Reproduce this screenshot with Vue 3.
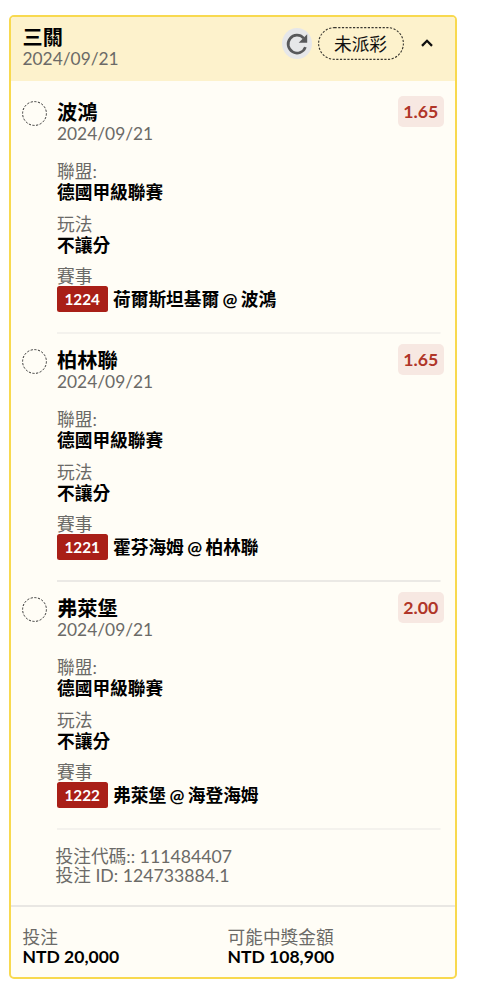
<script setup>
const legs = [
  { team: '波鴻', odds: '1.65', code: '1224', match: '荷爾斯坦基爾 @ 波鴻' },
  { team: '柏林聯', odds: '1.65', code: '1221', match: '霍芬海姆 @ 柏林聯' },
  { team: '弗萊堡', odds: '2.00', code: '1222', match: '弗萊堡 @ 海登海姆' },
]
</script>

<template>
  <main class="page">
    <article class="slip">
      <header class="head">
        <div class="head-text">
          <div class="title">三關</div>
          <div class="date">2024/09/21</div>
        </div>
        <button class="refresh" aria-label="refresh">
          <svg viewBox="0 0 30 30" width="30" height="30">
            <path d="M21.6 9.1 A8.9 8.9 0 1 0 23.4 18.1" fill="none" stroke="#58595b" stroke-width="2.7" />
            <path d="M25.2 5.3 V13.8 H16.7 Z" fill="#58595b" />
          </svg>
        </button>
        <span class="status">
          <svg class="outline" width="86" height="33" viewBox="0 0 86 33">
            <rect x="0.6" y="0.6" width="84.8" height="31.8" rx="15.9" fill="none" stroke="#39372f" stroke-width="1.1" stroke-dasharray="2.2 1.5" />
          </svg>
          未派彩
        </span>
        <svg class="chevron" width="12" height="8" viewBox="0 0 12 8">
          <path d="M1 6.9 L6 1.8 L11 6.9" fill="none" stroke="#111" stroke-width="2.3" />
        </svg>
      </header>

      <section v-for="leg in legs" :key="leg.code" class="leg">
        <svg class="mark" width="25" height="25" viewBox="0 0 25 25">
          <circle cx="12.5" cy="12.5" r="11.9" fill="none" stroke="#333" stroke-width="1" stroke-dasharray="2.2 1.5" />
        </svg>
        <div class="body">
          <div class="top">
            <div>
              <div class="title">{{ leg.team }}</div>
              <div class="date">2024/09/21</div>
            </div>
            <span class="odds">{{ leg.odds }}</span>
          </div>
          <dl>
            <dt>聯盟:</dt>
            <dd>德國甲級聯賽</dd>
            <dt>玩法</dt>
            <dd>不讓分</dd>
            <dt>賽事</dt>
            <dd class="match"><span class="code">{{ leg.code }}</span>{{ leg.match }}</dd>
          </dl>
        </div>
      </section>

      <div class="ids">
        <div>投注代碼:: 111484407</div>
        <div>投注 ID: 124733884.1</div>
      </div>

      <footer class="foot">
        <div class="sum">
          <div>投注</div>
          <strong>NTD 20,000</strong>
        </div>
        <div class="sum">
          <div>可能中獎金額</div>
          <strong>NTD 108,900</strong>
        </div>
      </footer>
    </article>
  </main>
</template>

<style>
body {
  background: #fff;
}
</style>

<style scoped>
.page {
  box-sizing: border-box;
  padding: 15px 0 0 9px;
  font-family: Lato, "Noto Sans CJK TC", sans-serif;
  font-size: 17.7px;
  line-height: 20px;
  color: #6b6a67;
  white-space: nowrap;
}
.slip {
  box-sizing: border-box;
  width: 447.5px;
  height: 964px;
  border: 2px solid #f8d94f;
  border-radius: 5px;
  background: #fffdf6;
  overflow: hidden;
}
.head {
  box-sizing: border-box;
  display: flex;
  align-items: flex-start;
  height: 63.5px;
  padding: 9px 22px 0 11.5px;
  background: #fdf2cc;
}
.head-text {
  flex: 1;
}
.title {
  font-size: 20.2px;
  font-weight: 700;
  line-height: 22px;
  color: #000;
}
.date {
  padding-top: 1px;
  font-size: 17.35px;
  line-height: 20px;
}
.refresh {
  width: 30px;
  height: 31px;
  margin: 2px 6px 0 0;
  padding: 0;
  border: 0;
  border-radius: 50%;
  background: #e6e7e9;
}
.refresh svg {
  display: block;
}
.status {
  position: relative;
  width: 86px;
  height: 33px;
  margin-top: 1px;
  line-height: 35px;
  text-align: center;
  color: #111;
}
.outline {
  position: absolute;
  left: 0;
  top: 0;
}
.chevron {
  margin: 13px 0 0 17px;
}
.leg {
  box-sizing: border-box;
  display: flex;
  height: 248px;
  padding: 15.5px 11px 0 11px;
}
.leg:first-of-type {
  margin-top: 5px;
}
.mark {
  flex: none;
  margin-right: 10px;
}
.body {
  flex: 1;
  height: 232.5px;
  box-sizing: border-box;
  background: linear-gradient(#f4f2ed, #f4f2ed) 0 100% / 383.5px 2px no-repeat;
}
.leg:nth-of-type(2) .body {
  background-image: linear-gradient(#ebe9e5, #ebe9e5);
}
.top {
  display: flex;
  justify-content: space-between;
  height: 60px;
}
.odds {
  width: 45.5px;
  height: 31px;
  margin-top: -5px;
  border-radius: 5px;
  background: #f7e8e2;
  color: #b03528;
  font-weight: 700;
  line-height: 32px;
  text-align: center;
}
dl {
  margin: 0;
}
dt {
  line-height: 21px;
}
dd {
  margin: 0 0 10.5px;
  line-height: 21px;
  font-weight: 700;
  color: #000;
}
.match {
  display: flex;
  align-items: center;
  height: 26px;
  margin-top: -0.8px;
  word-spacing: -0.9px;
}
.code {
  width: 50.5px;
  height: 26px;
  margin-right: 5.5px;
  border-radius: 2.5px;
  background: #a91f17;
  color: #fff;
  font-size: 15.3px;
  line-height: 26px;
  text-align: center;
}
.ids {
  box-sizing: border-box;
  height: 75px;
  padding: 17px 0 0 44.5px;
  line-height: 19.2px;
}
.foot {
  box-sizing: border-box;
  display: flex;
  height: 72px;
  padding-top: 21.5px;
  padding-left: 11.5px;
  border-top: 2px solid #e9e7e3;
}
.sum {
  width: 205px;
  line-height: 19.2px;
}
.sum strong {
  display: block;
  font-size: 17.55px;
  color: #000;
}
</style>
